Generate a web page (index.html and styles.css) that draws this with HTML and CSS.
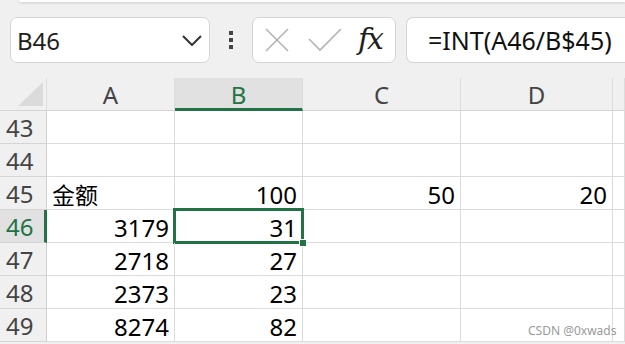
FILE: index.html
```html
<!DOCTYPE html>
<html lang="zh">

<head>
  <meta charset="UTF-8">
  <meta name="viewport" content="width=device-width, initial-scale=1.0">
  <link rel="stylesheet" href="styles.css">
</head>

<body>
  <div class="ribbon-edge"></div>

  <!-- Name box + formula bar -->
  <div class="formula-row">
    <div class="name-box">
      <span class="name-text">B46</span>
      <svg class="chevron" width="20" height="11" viewBox="0 0 20 11">
        <path d="M1 1 L10 10 L19 1" fill="none" stroke="#333" stroke-width="2"/>
      </svg>
    </div>
    <div class="grip">
      <span></span><span></span><span></span>
    </div>
    <div class="fx-box">
      <svg class="icon-cancel" width="24" height="24" viewBox="0 0 24 24">
        <path d="M1 1 L23 23 M23 1 L1 23" stroke="#b3b3b3" stroke-width="1.6"/>
      </svg>
      <svg class="icon-enter" width="34" height="24" viewBox="0 0 34 24">
        <path d="M1 11 L12 22 L33 1" fill="none" stroke="#b3b3b3" stroke-width="1.6"/>
      </svg>
      <span class="fx">fx</span>
    </div>
    <div class="formula-input">=INT(A46/B$45)</div>
  </div>

  <!-- Sheet -->
  <div class="sheet">
    <div class="hd corner"><span class="corner-tri"></span></div>
    <div class="hd col">A</div>
    <div class="hd col active">B</div>
    <div class="hd col">C</div>
    <div class="hd col">D</div>
    <div class="hd col"></div>

    <div class="hd row">43</div>
    <div class="cell"></div><div class="cell"></div><div class="cell"></div><div class="cell"></div><div class="cell"></div>

    <div class="hd row">44</div>
    <div class="cell"></div><div class="cell"></div><div class="cell"></div><div class="cell"></div><div class="cell"></div>

    <div class="hd row">45</div>
    <div class="cell text">金额</div><div class="cell">100</div><div class="cell">50</div><div class="cell">20</div><div class="cell"></div>

    <div class="hd row active">46</div>
    <div class="cell">3179</div><div class="cell selected">31<span class="fill-handle"></span></div><div class="cell"></div><div class="cell"></div><div class="cell"></div>

    <div class="hd row">47</div>
    <div class="cell">2718</div><div class="cell">27</div><div class="cell"></div><div class="cell"></div><div class="cell"></div>

    <div class="hd row">48</div>
    <div class="cell">2373</div><div class="cell">23</div><div class="cell"></div><div class="cell"></div><div class="cell"></div>

    <div class="hd row">49</div>
    <div class="cell">8274</div><div class="cell">82</div><div class="cell"></div><div class="cell"></div><div class="cell"></div>
  </div>

  <div class="watermark">CSDN @0xwads</div>
</body>

</html>
```

FILE: styles.css
```css
body, html {
  margin: 0;
  padding: 0;
  width: 625px;
  height: 344px;
  overflow: hidden;
  background-color: #f0f0f0;
  font-family: "Noto Sans", "Noto Sans CJK SC", sans-serif;
  color: #000000;
}

body {
  position: relative;
}

.ribbon-edge {
  height: 2px;
  margin-left: 19px;
  background: #ffffff;
  border-bottom-left-radius: 4px;
  box-shadow: 0 1px 3px rgba(0, 0, 0, 0.18);
}

/* formula bar row */
.formula-row {
  display: flex;
  align-items: center;
  margin-top: 15px;
  height: 46px;
  padding-left: 10px;
}

.formula-row > * {
  flex-shrink: 0;
}

.name-box {
  box-sizing: border-box;
  width: 200px;
  height: 46px;
  background: #ffffff;
  border: 1px solid #d4d4d4;
  border-radius: 7px;
  display: flex;
  align-items: center;
  justify-content: space-between;
  padding: 0 7px 0 6px;
}

.name-text {
  font-size: 24px;
  color: #1e1e1e;
}

.grip {
  display: flex;
  flex-direction: column;
  gap: 3px;
  margin: 0 19px 0 19px;
}

.grip span {
  display: block;
  width: 4px;
  height: 4px;
  background: #444444;
}

.fx-box {
  box-sizing: border-box;
  width: 144px;
  height: 46px;
  background: #ffffff;
  border: 1px solid #d4d4d4;
  border-radius: 7px;
  display: flex;
  align-items: center;
  padding-left: 12px;
}

.icon-cancel {
  margin-right: 19px;
}

.fx {
  font-family: "DejaVu Serif", "Liberation Serif", serif;
  font-style: italic;
  font-size: 30px;
  margin-left: 16px;
  color: #1e1e1e;
  line-height: 1;
  margin-top: -3px;
  letter-spacing: -2px;
}

.formula-input {
  box-sizing: border-box;
  flex: 1;
  flex-shrink: 1;
  min-width: 0;
  height: 46px;
  margin-left: 10px;
  background: #ffffff;
  border: 1px solid #d4d4d4;
  border-right: none;
  border-radius: 7px 0 0 7px;
  padding-left: 21px;
  font-size: 25px;
  display: flex;
  align-items: center;
  color: #111111;
  white-space: nowrap;
  overflow: hidden;
}

/* sheet grid */
.sheet {
  margin-top: 15px;
  display: grid;
  grid-template-columns: 47px 128px 128px 158px 152px 1fr;
  grid-auto-rows: 33px;
  background: #ffffff;
}

.hd {
  box-sizing: border-box;
  background: #f0f0f0;
  color: #444444;
  font-size: 24px;
  display: flex;
  align-items: center;
  justify-content: center;
  border-right: 1px solid #dcdcdc;
  border-bottom: 1px solid #d4d4d4;
}

.hd.col {
  padding-top: 1px;
}

.hd.col.active {
  background: #e1e1e1;
  color: #217346;
  border-bottom: 3px solid #217346;
  padding-top: 3px;
}

.hd.row {
  justify-content: flex-start;
  padding-left: 6px;
  padding-top: 1px;
  border-right: 1px solid #cfcfcf;
}

.hd.row.active {
  background: #e1e1e1;
  color: #217346;
  border-right: 3px solid #217346;
}

.corner {
  align-items: flex-end;
  justify-content: flex-end;
  padding: 0 3px 4px 0;
}

.corner-tri {
  display: block;
  width: 25px;
  height: 24px;
  background: #dbdbdb;
  clip-path: polygon(100% 0, 100% 100%, 0 100%);
}

.cell {
  box-sizing: border-box;
  border-right: 1px solid #dcdcdc;
  border-bottom: 1px solid #dcdcdc;
  font-size: 24px;
  display: flex;
  align-items: center;
  justify-content: flex-end;
  padding: 2px 5px 0 0;
  position: relative;
}

.cell.text {
  justify-content: flex-start;
  padding-left: 5px;
  font-family: "Noto Sans CJK SC", sans-serif;
  font-size: 23px;
}

.cell.selected::after {
  content: "";
  position: absolute;
  left: -2px;
  top: -2px;
  right: -2px;
  bottom: -2px;
  border: 3px solid #217346;
}

.fill-handle {
  position: absolute;
  right: -5px;
  bottom: -5px;
  width: 6px;
  height: 6px;
  background: #217346;
  border: 1px solid #ffffff;
  z-index: 2;
}

.watermark {
  position: absolute;
  left: 528px;
  top: 322px;
  font-size: 12px;
  color: #9a9a9a;
  font-family: "Noto Sans", sans-serif;
}
```
